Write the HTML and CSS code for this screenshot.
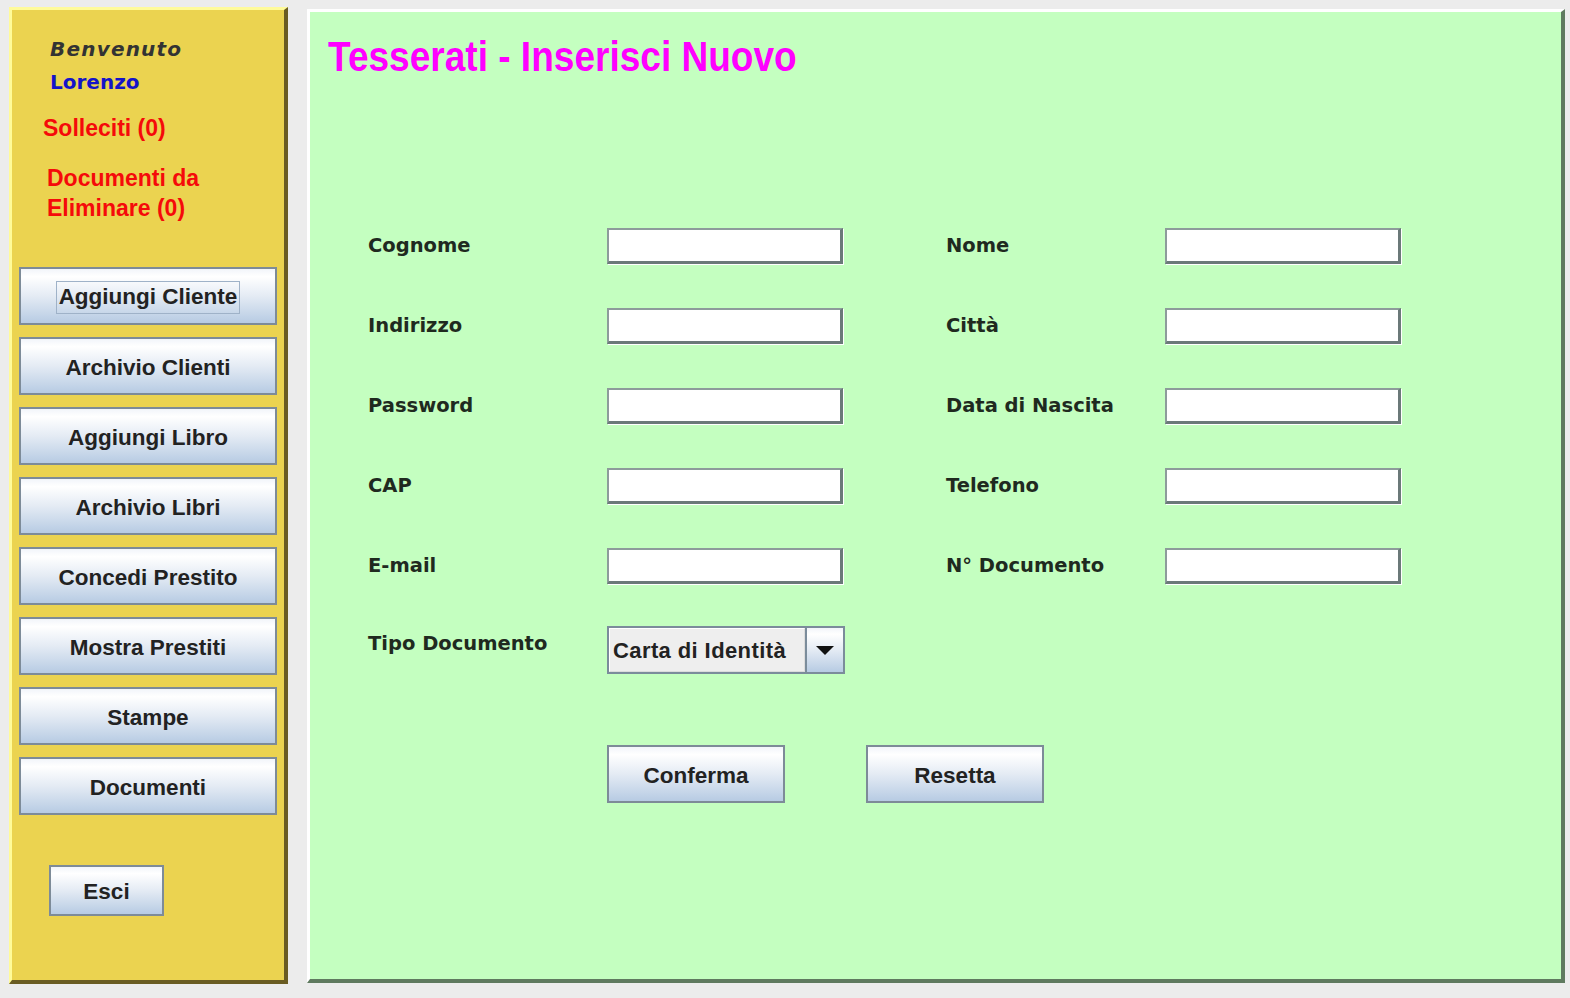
FILE: index.html
```html
<!DOCTYPE html>
<html lang="it">
<head>
<meta charset="utf-8">
<title>Tesserati - Inserisci Nuovo</title>
<link rel="stylesheet" href="styles.css">
</head>
<body>
<div class="app">
  <aside class="sidebar">
    <div class="welcome">Benvenuto</div>
    <div class="user">Lorenzo</div>
    <div class="alert alert-solleciti">Solleciti (0)</div>
    <div class="alert alert-docs">Documenti da<br>Eliminare (0)</div>
    <nav class="menu">
      <button class="btn menu-btn"><span class="focus">Aggiungi Cliente</span></button>
      <button class="btn menu-btn">Archivio Clienti</button>
      <button class="btn menu-btn">Aggiungi Libro</button>
      <button class="btn menu-btn">Archivio Libri</button>
      <button class="btn menu-btn">Concedi Prestito</button>
      <button class="btn menu-btn">Mostra Prestiti</button>
      <button class="btn menu-btn">Stampe</button>
      <button class="btn menu-btn">Documenti</button>
    </nav>
    <button class="btn exit-btn">Esci</button>
  </aside>
  <main class="panel">
    <h1 class="title"><span class="title-text">Tesserati - Inserisci Nuovo</span></h1>
    <div class="form">
      <label class="lbl">Cognome</label>
      <input class="field" type="text">
      <span class="spacer"></span>
      <label class="lbl">Nome</label>
      <input class="field" type="text">

      <label class="lbl">Indirizzo</label>
      <input class="field" type="text">
      <span class="spacer"></span>
      <label class="lbl">Città</label>
      <input class="field" type="text">

      <label class="lbl">Password</label>
      <input class="field" type="text">
      <span class="spacer"></span>
      <label class="lbl">Data di Nascita</label>
      <input class="field" type="text">

      <label class="lbl">CAP</label>
      <input class="field" type="text">
      <span class="spacer"></span>
      <label class="lbl">Telefono</label>
      <input class="field" type="text">

      <label class="lbl">E-mail</label>
      <input class="field" type="text">
      <span class="spacer"></span>
      <label class="lbl">N° Documento</label>
      <input class="field" type="text">

      <label class="lbl lbl-top">Tipo Documento</label>
      <div class="combo">
        <span class="combo-text">Carta di Identità</span>
        <span class="combo-arrow"><span class="tri"></span></span>
      </div>
    </div>
    <div class="actions">
      <button class="btn action-btn">Conferma</button>
      <button class="btn action-btn">Resetta</button>
    </div>
  </main>
</div>
</body>
</html>
```
FILE: styles.css
```css
* { box-sizing: border-box; }

html, body {
  margin: 0;
  padding: 0;
  background: #ececec;
  width: 1570px;
  height: 998px;
  overflow: hidden;
}

.app {
  display: flex;
  align-items: flex-start;
  padding: 7px 0 0 9px;
}

/* ---------- Sidebar ---------- */
.sidebar {
  width: 279px;
  height: 977px;
  background: #ebd350;
  border-style: solid;
  border-width: 3px 4px 4px 3px;
  border-color: #fffb9a #6a5c22 #6a5c22 #fffb9a;
  display: flex;
  flex-direction: column;
  padding-top: 27px;
}

.welcome {
  font-family: "DejaVu Sans", sans-serif;
  font-weight: bold;
  font-style: italic;
  font-size: 20px;
  line-height: 24px;
  letter-spacing: 1.2px;
  color: #333333;
  padding-left: 38px;
}

.user {
  font-family: "DejaVu Sans", sans-serif;
  font-weight: bold;
  font-size: 20px;
  line-height: 24px;
  color: #1414c8;
  padding-left: 38px;
  margin-top: 9px;
}

.alert {
  font-family: "Liberation Sans", Arial, sans-serif;
  font-weight: bold;
  font-size: 23px;
  line-height: 28px;
  color: #f50a0a;
  margin-top: 20px;
}

.alert-solleciti { padding-left: 31px; }
.alert-docs { padding-left: 35px; margin-top: 21px; line-height: 30px; }

.menu {
  display: flex;
  flex-direction: column;
  gap: 12px;
  margin-top: 44px;
  padding-left: 7px;
}

.btn {
  font-family: "Liberation Sans", Arial, sans-serif;
  font-weight: bold;
  font-size: 22.5px;
  color: #222222;
  border: 2px solid #7d8b98;
  background: linear-gradient(to bottom, #f2f5fa 0%, #ffffff 14%, #e4ebf4 50%, #c9d8ea 80%, #b7cbe3 100%);
  padding: 3px 0 0 0;
  margin: 0;
  display: flex;
  align-items: center;
  justify-content: center;
  cursor: pointer;
}

.menu-btn {
  width: 258px;
  height: 58px;
}

.focus {
  border: 1px solid #9fb2c8;
  padding: 1px 2px 3px 2px;
  line-height: 27px;
}

.exit-btn {
  width: 115px;
  height: 51px;
  margin-top: 50px;
  margin-left: 37px;
}

/* ---------- Main panel ---------- */
.panel {
  margin-left: 19px;
  margin-top: 2px;
  width: 1258px;
  height: 974px;
  background: #c4ffc0;
  border-style: solid;
  border-width: 3px 4px 4px 3px;
  border-color: #ffffff #5f7a5f #5f7a5f #ffffff;
}

.title {
  margin: 20px 0 0 0;
  padding-left: 18px;
  font-family: "Liberation Sans", Arial, sans-serif;
  font-weight: bold;
  font-size: 42px;
  line-height: 50px;
  color: #ff00ff;
}

.title-text {
  display: inline-block;
  transform: scaleX(0.882);
  transform-origin: left center;
  white-space: nowrap;
}

.form {
  display: grid;
  grid-template-columns: 239px 236px 103px 219px 236px;
  grid-template-rows: repeat(5, 36px) 48px;
  row-gap: 44px;
  margin-top: 146px;
  margin-left: 58px;
}

.lbl {
  font-family: "DejaVu Sans", sans-serif;
  font-weight: bold;
  font-size: 19.5px;
  line-height: 24px;
  color: #1f2a1f;
  align-self: center;
}

.lbl-top {
  align-self: start;
  margin-top: 4px;
}

.field {
  width: 236px;
  height: 36px;
  background: #ffffff;
  border-style: solid;
  border-width: 2px 3px 3px 2px;
  border-color: #8d9b9b #6b7979 #6b7979 #8d9b9b;
  box-shadow: 1px 1px 0 #ffffff;
  margin: 0;
  padding: 0 4px;
  outline: none;
}

.combo {
  grid-column: 2 / span 2;
  width: 238px;
  height: 48px;
  margin-top: -2px;
  border: 2px solid #7b8c9b;
  display: flex;
  background: #eeeeee;
}

.combo-text {
  flex: 1;
  display: flex;
  align-items: center;
  padding-left: 3px;
  padding-top: 2px;
  font-family: "Liberation Sans", Arial, sans-serif;
  font-weight: bold;
  font-size: 22px;
  letter-spacing: 0.4px;
  color: #222222;
  background: #eeeeee;
  border: 1px solid #ffffff;
  border-right-color: #dcdcdc;
  border-bottom-color: #dcdcdc;
}

.combo-arrow {
  width: 38px;
  border-left: 2px solid #7b8c9b;
  background: linear-gradient(to bottom, #f2f5fa 0%, #ffffff 14%, #e4ebf4 50%, #c9d8ea 80%, #b7cbe3 100%);
  display: flex;
  align-items: center;
  justify-content: center;
}

.tri {
  width: 0;
  height: 0;
  border-left: 9px solid transparent;
  border-right: 9px solid transparent;
  border-top: 9px solid #111111;
}

.actions {
  display: flex;
  gap: 81px;
  margin-left: 297px;
  margin-top: 69px;
}

.action-btn {
  width: 178px;
  height: 58px;
}
```
